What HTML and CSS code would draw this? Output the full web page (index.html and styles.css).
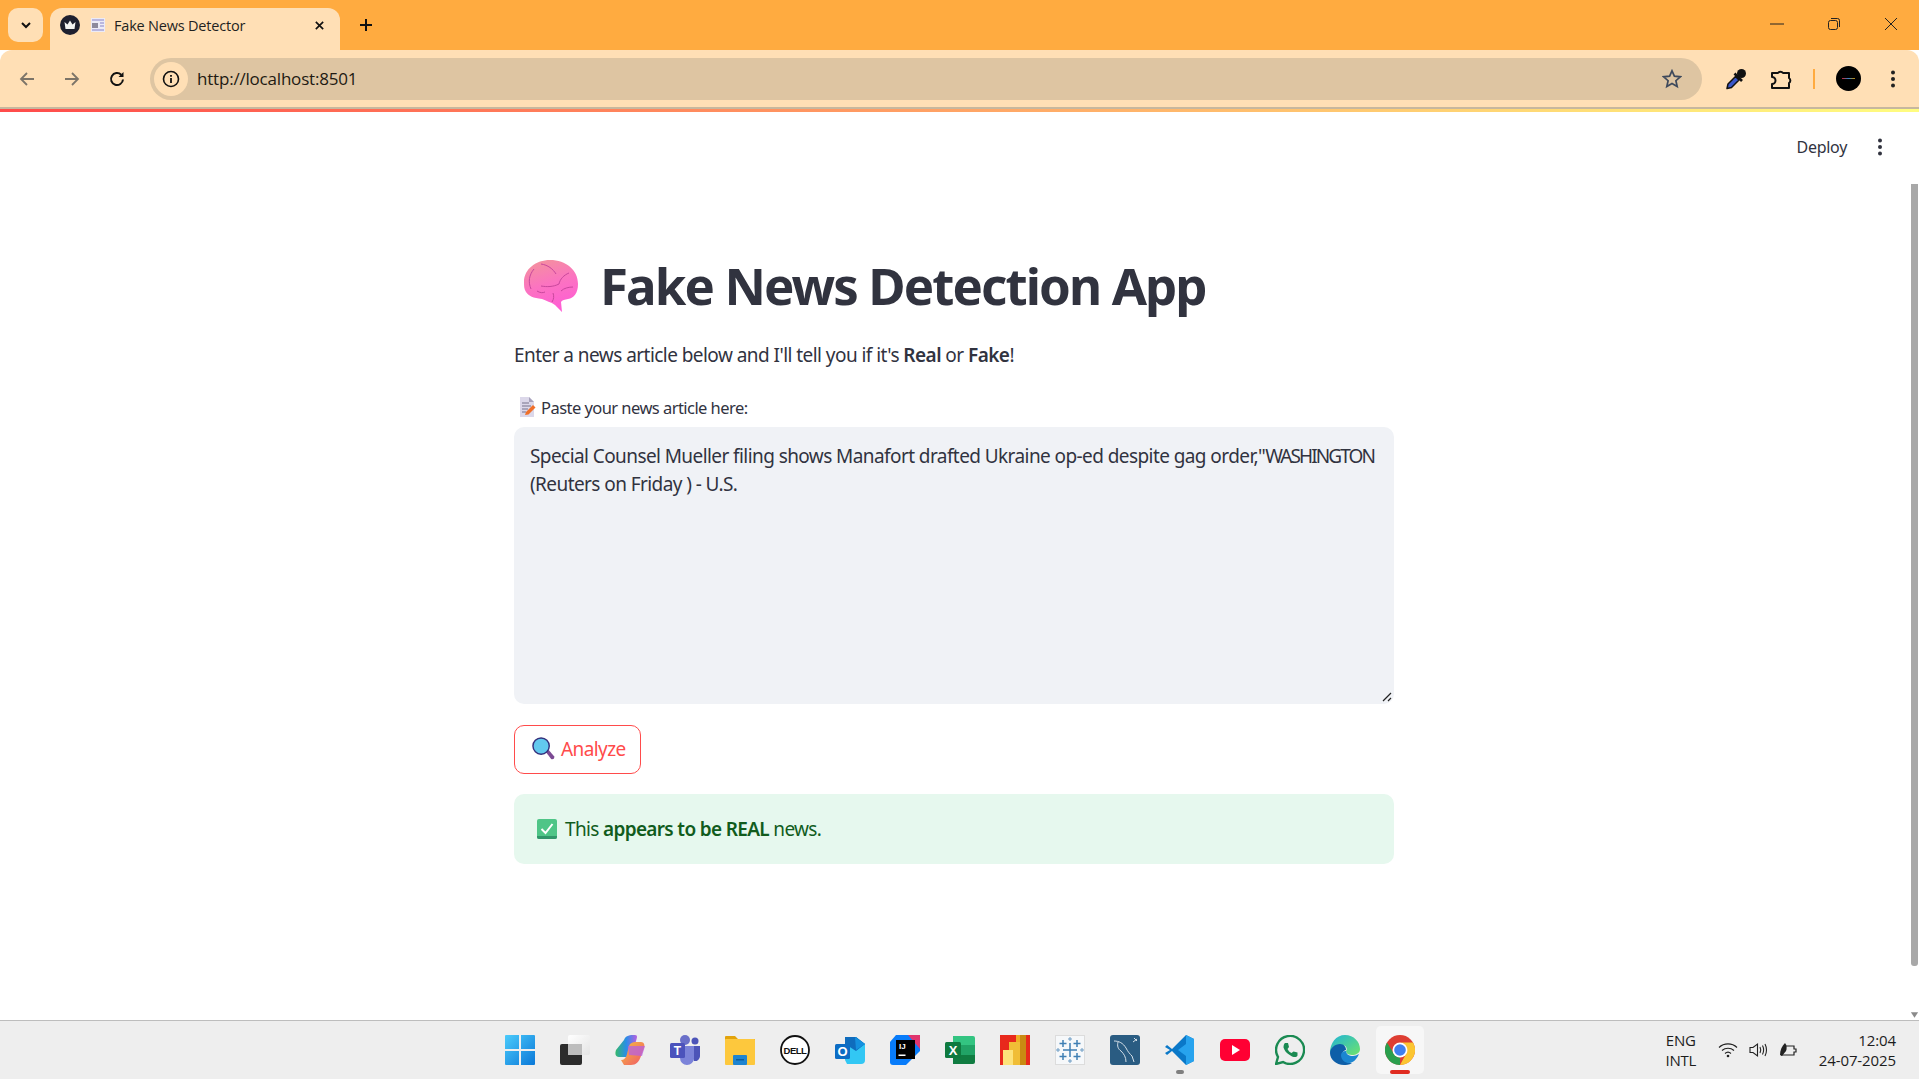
FILE: index.html
```html
<!DOCTYPE html>
<html lang="en">
<head>
<meta charset="utf-8">
<title>Fake News Detector</title>
<link rel="stylesheet" href="styles.css">
</head>
<body>
<div class="screen">
  <header class="tabstrip">
    <div class="tab-search"><svg class="i12" viewBox="0 0 12 12"><path d="M2 4l4 4 4-4" fill="none" stroke="#111" stroke-width="2"/></svg></div>
    <div class="tab">
      <svg class="i20" viewBox="0 0 20 20"><circle cx="10" cy="10" r="10" fill="#1e2030"/><path d="M4.500 7l3 2.500L10 5.500l2.500 4 3-2.500-1 7h-9z" fill="#f4f4f4"/></svg>
      <svg class="fav" viewBox="0 0 14 14"><rect width="14" height="14" fill="#ecebf6"/><path d="M1 2h12M1 12h12M9 5h4M9 8h4" stroke="#a9a6d8" stroke-width="1.500"/><rect x="1" y="5" width="6" height="5" fill="#8d8a9c"/></svg>
      <span class="tab-title">Fake News Detector</span>
      <svg class="i12 tab-close" viewBox="0 0 12 12"><path d="M2 2l8 8M10 2l-8 8" stroke="#111" stroke-width="1.800"/></svg>
    </div>
    <svg class="newtab" viewBox="0 0 14 14"><path d="M7 1v12M1 7h12" stroke="#111" stroke-width="2"/></svg>
    <div class="win-controls">
      <svg class="win" viewBox="0 0 14 14"><path d="M0 7h14" stroke="#222" stroke-width="1"/></svg>
      <svg class="win" viewBox="0 0 14 14"><rect x="1.500" y="3.500" width="9" height="9" rx="2" fill="none" stroke="#222"/><path d="M4 1.500h6.500a2 2 0 0 1 2 2V10" fill="none" stroke="#222"/></svg>
      <svg class="win" viewBox="0 0 14 14"><path d="M1 1l12 12M13 1L1 13" stroke="#222" stroke-width="1"/></svg>
    </div>
  </header>

  <nav class="toolbar">
    <svg class="nav-icon" viewBox="0 0 18 18"><path d="M16 9H3M9 3L3 9l6 6" fill="none" stroke="#7c7468" stroke-width="1.800"/></svg>
    <svg class="nav-icon" viewBox="0 0 18 18"><path d="M2 9h13M9 3l6 6-6 6" fill="none" stroke="#7c7468" stroke-width="1.800"/></svg>
    <svg class="nav-icon" viewBox="0 0 18 18"><path d="M15 9.500A6 6 0 1 1 13.200 4.700" fill="none" stroke="#111" stroke-width="2"/><path d="M15.500 2v5h-5z" fill="#111"/></svg>
    <div class="omnibox">
      <span class="site-info"><svg class="i18" viewBox="0 0 18 18"><circle cx="9" cy="9" r="7.500" fill="none" stroke="#111" stroke-width="1.600"/><path d="M9 8v5M9 5v1.800" stroke="#111" stroke-width="1.800"/></svg></span>
      <span class="url">http://localhost:8501</span>
      <svg class="star" viewBox="0 0 20 20"><path d="M10 1.800l2.400 5.400 5.900.6-4.400 3.900 1.300 5.800L10 14.500l-5.200 3 1.300-5.800L1.700 7.800l5.900-.6z" fill="none" stroke="#3f4a5c" stroke-width="1.700"/></svg>
    </div>
    <div class="tb-actions">
      <svg class="i22" viewBox="0 0 22 22"><path d="M2 20.500l1-4.500 7.500-7.500 3.500 3.500L6.500 19.500z" fill="#3a56c8" stroke="#111" stroke-width="1.500" stroke-linejoin="round"/><path d="M9.500 5.500l7.500 7.500" stroke="#111" stroke-width="2.600"/><circle cx="16.500" cy="5.500" r="4.500" fill="#111"/></svg>
      <svg class="i22" viewBox="0 0 22 22"><path d="M2 5h6a3 3 0 0 1 5 0h6v5a3 3 0 0 1 0 5v5H2v-4a3.500 3.500 0 0 0 0-7z" fill="none" stroke="#111" stroke-width="2" stroke-linejoin="round"/></svg>
      <span class="tb-divider"></span>
      <span class="avatar"><span class="avatar-dash"></span></span>
      <svg class="kebab" viewBox="0 0 4 18"><circle cx="2" cy="2.500" r="2" fill="#222"/><circle cx="2" cy="9" r="2" fill="#222"/><circle cx="2" cy="15.500" r="2" fill="#222"/></svg>
    </div>
  </nav>
  <div class="chrome-edge"></div>
  <div class="decoration"></div>

  <div class="viewport">
    <main class="app">
      <div class="app-header">
        <span class="deploy">Deploy</span>
        <svg class="app-menu" viewBox="0 0 4 18"><circle cx="2" cy="2.500" r="2" fill="#31333f"/><circle cx="2" cy="9" r="2" fill="#31333f"/><circle cx="2" cy="15.500" r="2" fill="#31333f"/></svg>
      </div>
      <section class="block">
        <h1 class="title">
          <svg class="brain" viewBox="0 0 56 52">
            <defs><linearGradient id="brainfill" x1=".3" y1="0" x2=".6" y2="1"><stop offset="0" stop-color="#f4909f"/><stop offset=".45" stop-color="#fb74c0"/><stop offset="1" stop-color="#ff5cd6"/></linearGradient></defs>
            <path d="M1 22C1 9 13 0 27 0c16 0 28 10 28 24 0 9-4 14-10 15-3 .5-6 1-7 3l1 10-7-7c-4-3-9-4-13-6C10 38 6 36 3 32 1 29 1 26 1 22z" fill="url(#brainfill)"/>
            <path d="M11 9c-5 6-6 13-3 20M18 4c7 1 12 5 15 10M46 13c-5 2-9 6-10 11-6 3-12 3-18 2M50 27c-4 0-9 1-12 4M29 42c2-3 2-6 1-9M14 31c3 2 6 2 8 1" fill="none" stroke="#c8479c" stroke-width="1"/>
          </svg>
          <span>Fake News Detection App</span>
        </h1>
        <p class="intro">Enter a news article below and I'll tell you if it's <strong>Real</strong> or <strong>Fake</strong>!</p>
        <label class="field-label">
          <svg class="memo" viewBox="0 0 18 20"><path d="M2 0h9l5 5v15H2z" fill="#dcd8ea"/><path d="M11 0v5h5z" fill="#a7a2bb"/><path d="M4 6h7M4 9h9M4 12h6M4 15h4" stroke="#77728c" stroke-width="1"/><path d="M7 18l1-3 7-7 2.500 2.500-7 7z" fill="#f0702a"/></svg>
          <span>Paste your news article here:</span>
        </label>
        <div class="textarea">
          <div class="textarea-text">Special Counsel Mueller filing shows Manafort drafted Ukraine op-ed despite gag order,"<span class="caps">WASHINGTON</span> (Reuters on Friday ) - U.S.</div>
          <svg class="resize" viewBox="0 0 10 10"><path d="M1 9l8-8M6 9l3-3" stroke="#222" stroke-width="1.200"/></svg>
        </div>
        <button class="analyze" type="button">
          <svg class="lens" viewBox="0 0 24 24"><path d="M14 15l3-2 6 7c1 2-1 4-3 3z" fill="#7b4a93"/><circle cx="9.500" cy="9.500" r="8.500" fill="#62c9ee" stroke="#34307c" stroke-width="1.500"/></svg>
          <span>Analyze</span>
        </button>
        <div class="alert">
          <svg class="check" viewBox="0 0 20 20"><rect width="20" height="20" rx="2" fill="#4fc587"/><path d="M0 17h20v1a2 2 0 0 1-2 2H2a2 2 0 0 1-2-2z" fill="#31966a"/><path d="M4.500 10l4 4 7-9" fill="none" stroke="#fff" stroke-width="2"/></svg>
          <span>This <strong>appears to be REAL</strong> news.</span>
        </div>
      </section>
    </main>
    <aside class="scrollbar">
      <span class="thumb"></span>
      <svg class="scroll-arrow" viewBox="0 0 10 6"><path d="M1 0h8L5 6z" fill="#8a8a8a"/></svg>
    </aside>
  </div>

  <footer class="taskbar">
    <div></div>
    <div class="tb-apps">
      <svg class="app-i" viewBox="0 0 30 30"><defs><linearGradient id="w" x1="0" y1="0" x2="1" y2="1"><stop offset="0" stop-color="#4bcbfb"/><stop offset="1" stop-color="#0a78d8"/></linearGradient></defs><path d="M0 1a1 1 0 0 1 1-1h13v14H0zM16 0h13a1 1 0 0 1 1 1v13H16zM0 16h14v14H1a1 1 0 0 1-1-1zM16 16h14v13a1 1 0 0 1-1 1H16z" fill="url(#w)"/></svg>
      <svg class="app-i" viewBox="0 0 30 30"><defs><linearGradient id="tv" x1="0" y1="0" x2="1" y2="1"><stop offset="0" stop-color="#fff"/><stop offset="1" stop-color="#e4e4e4"/></linearGradient></defs><rect x="8" y="0" width="22" height="20" rx="2" fill="url(#tv)"/><rect x="0" y="9" width="22" height="21" rx="2" fill="#2b2b2b"/><rect x="8" y="9" width="14" height="11" fill="#bdbdbd"/></svg>
      <svg class="app-i" viewBox="0 0 30 30"><defs><linearGradient id="c1" x1="0" y1="0" x2="1" y2="0"><stop offset="0" stop-color="#35b96b"/><stop offset=".5" stop-color="#2a8de8"/><stop offset="1" stop-color="#b760e0"/></linearGradient><linearGradient id="c2" x1="0" y1="0" x2="1" y2="1"><stop offset="0" stop-color="#f6c13a"/><stop offset="1" stop-color="#f0566a"/></linearGradient></defs><path d="M9 5c2-5 6-5 11-5 3 0 2 3 1 6l-3 10c-1 4-3 6-7 6H4c-4 0-4-4-3-7z" fill="url(#c1)"/><path d="M6 25c3 0 5-2 6-6l2-8c1-3 4-4 6-4h6c3 0 4 3 3 6l-3 8c-2 6-5 9-10 9H9z" fill="url(#c2)"/><path d="M13 11h17l-3 10-13-1z" fill="#b760e0" opacity=".75"/></svg>
      <svg class="app-i" viewBox="0 0 30 30"><circle cx="15" cy="5" r="5" fill="#6a70c9"/><circle cx="25" cy="6" r="3.500" fill="#4c54b8"/><path d="M19 11h11v10a5 5 0 0 1-6 5z" fill="#4c54b8"/><path d="M8 11h16v12a7 7 0 0 1-14 0z" fill="#7b83d9"/><rect y="8" width="15" height="15" rx="1.500" fill="#4b53bc"/><text x="7.500" y="20" class="ico-t ico-t-sm" text-anchor="middle">T</text></svg>
      <svg class="app-i" viewBox="0 0 30 30"><path d="M0 2a1 1 0 0 1 1-1h9l3 3h17v5H0z" fill="#e2a30c"/><rect y="4" width="30" height="26" rx="1" fill="#fdc83d"/><rect x="8" y="20" width="14" height="10" rx="1" fill="#1e84d0"/><rect x="11" y="24" width="8" height="1.500" fill="#0b5c9e"/></svg>
      <svg class="app-i" viewBox="0 0 30 30"><circle cx="15" cy="15" r="14" fill="#fff" stroke="#111" stroke-width="1.800"/><text x="15" y="18.500" class="ico-dell" text-anchor="middle">DELL</text></svg>
      <svg class="app-i" viewBox="0 0 30 30"><path d="M10 2h11l9 7v16a4 4 0 0 1-4 4H12l-2-4z" fill="#32c7f4"/><path d="M10 2h11l9 7-9 7-11-7z" fill="#0f6cbd"/><path d="M20 2l10 7-9 6z" fill="#1490df"/><rect y="9" width="15" height="15" rx="1.500" fill="#0c6cc4"/><text x="7.500" y="21" class="ico-t" text-anchor="middle">O</text></svg>
      <svg class="app-i" viewBox="0 0 30 30"><path d="M6 0h24v16L16 30H3a3 3 0 0 1-3-3V7z" fill="#087cfa"/><path d="M18 0h12v14z" fill="#e0356e"/><rect x="6" y="5" width="19" height="19" fill="#000"/><text x="9" y="14" class="ico-t ico-t-xs">IJ</text><rect x="8.500" y="19.500" width="7" height="1.500" fill="#fff"/></svg>
      <svg class="app-i" viewBox="0 0 30 30"><path d="M8 1h20a2 2 0 0 1 2 2v7H8z" fill="#33c481"/><rect x="8" y="10" width="22" height="10" fill="#21a366"/><path d="M8 20h22v7a2 2 0 0 1-2 2H8z" fill="#107c41"/><rect y="7" width="16" height="16" rx="1.500" fill="#0e7a3f"/><text x="8" y="20" class="ico-t" text-anchor="middle">X</text></svg>
      <svg class="app-i" viewBox="0 0 30 30"><rect width="30" height="30" fill="#e8291c"/><rect x="16" width="10" height="30" fill="#c98a12"/><rect x="16" width="4" height="30" fill="#efae25"/><rect x="9" y="7" width="11" height="23" fill="#f0bd36"/><rect x="3" y="15" width="10" height="15" fill="#fde27a"/></svg>
      <svg class="app-i" viewBox="0 0 30 30"><rect x=".5" y=".5" width="29" height="29" fill="#f6f8fa" stroke="#dcdcdc"/><path d="M15 8v14M8 15h14M8 5v7M4.500 8.500h7M22 5v7M18.500 8.500h7M8 18v7M4.500 21.500h7M22 18v7M18.500 21.500h7" stroke="#3f7fb4" stroke-width="1.500"/><path d="M15 2v4M13 4h4M15 24v4M13 26h4M3 13v4M1 15h4M27 13v4M25 15h4" stroke="#6c9cc4" stroke-width="1"/></svg>
      <svg class="app-i" viewBox="0 0 30 30"><rect width="30" height="30" rx="3" fill="#2a5c82"/><path d="M4 6c5 0 9 2 12 7 2 4 4 6 6 8l2 6M8 7c-1 4 0 7 3 9 3 3 5 6 5 11M24 3l3 3M23 7l4-3" fill="none" stroke="#d4dfe8" stroke-width="1"/></svg>
      <span class="vscode-wrap">
        <svg class="app-i" viewBox="0 0 30 30"><path d="M21 0l8 4v22l-8 4L7 16l-5 4-2-2 5-3-5-3 2-2 5 4z" fill="#0a78c8"/><path d="M21 0l8 4v22l-8 4V21l-8-6 8-6z" fill="#27a3ee"/></svg>
        <span class="running"></span>
      </span>
      <svg class="app-i" viewBox="0 0 30 30"><rect y="4" width="30" height="22" rx="5" fill="#ff0033"/><path d="M12 10l8 5-8 5z" fill="#fff"/></svg>
      <svg class="app-i" viewBox="0 0 30 30"><path d="M1 29l2-7A14 14 0 1 1 8 27z" fill="none" stroke="#1a8a52" stroke-width="2.400"/><path d="M10 8l3 0 1 4-1.500 2c1 2 2 3 4 4l2-1.500 4 1v3c-1 2-4 2-7 0-4-2-6-5-7-8 0-2 .5-4 1.500-4.500z" fill="#1a8a52"/></svg>
      <svg class="app-i" viewBox="0 0 30 30"><defs><linearGradient id="e1" x1="0" y1="0" x2="1" y2="1"><stop offset="0" stop-color="#1fb4d8"/><stop offset="1" stop-color="#6fe36b"/></linearGradient></defs><path d="M15 0c9 0 15 7 15 14 0 4-4 6-8 6-5 0-6-3-6-4 2-2 0-6-4-6C6 10 2 14 0 18 0 8 6 0 15 0z" fill="url(#e1)"/><path d="M0 18c0-5 5-9 10-9 4 0 6 3 6 6-4 1-5 5-2 9 2 3 5 4 8 4-3 2-6 2-8 2-8 0-14-6-14-12z" fill="#0e5fa8"/><path d="M16 16c0 3 3 5 7 5 2 0 4-1 6-2-2 5-6 9-10 9-5 0-8-4-8-8 0-2 2-4 5-4z" fill="#1b86d1"/></svg>
      <span class="chrome-wrap">
        <svg class="app-i" viewBox="0 0 30 30"><circle cx="15" cy="15" r="15" fill="#de3e33"/><path d="M15 30A15 15 0 0 1 2 7.500L9 19a7 7 0 0 0 6 3.500z" fill="#2a9f4d"/><path d="M15 30a15 15 0 0 0 13-22.500H15a7.500 7.500 0 0 1 6 11.500z" fill="#fbc531"/><circle cx="15" cy="15" r="7.500" fill="#fff"/><circle cx="15" cy="15" r="5.800" fill="#3f7fee"/></svg>
        <span class="active-bar"></span>
      </span>
    </div>
    <div class="tray">
      <div class="lang">ENG<br>INTL</div>
      <svg class="tray-i" viewBox="0 0 20 16"><path d="M1 5.500a13 13 0 0 1 18 0M4 8.500a9 9 0 0 1 12 0M7 11.500a4.500 4.500 0 0 1 6 0" fill="none" stroke="#222" stroke-width="1.100"/><circle cx="10" cy="14" r="1.300" fill="#222"/></svg>
      <svg class="tray-i" viewBox="0 0 20 16"><path d="M1 5.500h3L8.500 2v12L4 10.500H1zM11 5c1 2 1 4 0 6M13.500 3.500c1.500 3 1.500 6 0 9M16 2c2 4 2 8 0 12" fill="none" stroke="#222" stroke-width="1.100"/></svg>
      <svg class="tray-i" viewBox="0 0 20 16"><path d="M5 4h10v3h2v3h-2v3H2" fill="none" stroke="#222" stroke-width="1.200"/><path d="M1 13c0-5 2-9 5-12 2 2 2 6 1 8l-4 5z" fill="#222"/></svg>
      <div class="clock">12:04<br>24-07-2025</div>
    </div>
  </footer>
</div>
</body>
</html>
```
FILE: styles.css
```css
* { box-sizing: border-box; }
html, body { margin: 0; height: 100%; overflow: hidden; }
body { font-family: "Noto Sans", sans-serif; color: #31333f; background: #fff; }
svg { display: block; flex: none; }
.screen { display: flex; flex-direction: column; height: 1079px; width: 1919px; }

.tabstrip { height: 50px; background: #ffab40; display: flex; align-items: flex-start; padding-left: 8px; flex: none; }
.tab-search { width: 35px; height: 34px; margin-top: 8px; border-radius: 10px; background: #ffdfb5; display: flex; align-items: center; justify-content: center; }
.i12 { width: 12px; height: 12px; }
.i18 { width: 18px; height: 18px; }
.i20 { width: 20px; height: 20px; }
.i22 { width: 22px; height: 22px; }
.tab { width: 290px; height: 42px; margin: 8px 0 0 7px; padding: 0 15px 8px 10px; border-radius: 12px 12px 0 0; background: #ffdfb5; display: flex; align-items: center; }
.fav { width: 14px; height: 14px; margin-left: 11px; }
.tab-title { font-family: "Open Sans", sans-serif; font-size: 14.500px; letter-spacing: -.2px; margin-left: 9px; flex: 1; color: #1f1f1f; white-space: nowrap; }
.tab-close { width: 11px; height: 11px; }
.newtab { width: 14px; height: 14px; margin: 18px 0 0 19px; }
.win-controls { margin-left: auto; display: flex; gap: 43px; padding: 17px 21px 0 0; }
.win { width: 14px; height: 14px; }

.toolbar { height: 57px; background: #ffdfb5; display: flex; align-items: center; padding: 0 0 0 18px; flex: none; border-radius: 12px 12px 0 0; }
.nav-icon { width: 18px; height: 18px; margin-right: 27px; }
.omnibox { height: 42px; width: 1552px; margin-left: -3px; border-radius: 21px; background: #dec5a2; display: flex; align-items: center; padding-left: 4px; }
.site-info { width: 34px; height: 34px; border-radius: 50%; background: #ffdfb5; display: flex; align-items: center; justify-content: center; flex: none; }
.url { font-family: "Open Sans", sans-serif; font-size: 17px; letter-spacing: -.2px; margin-left: 9px; color: #221a12; flex: 1; }
.star { width: 20px; height: 20px; margin-right: 20px; }
.tb-actions { display: flex; align-items: center; margin-left: 23px; }
.tb-actions .i22:nth-child(2) { margin-left: 23px; }
.tb-divider { width: 2px; height: 20px; background: #ffab40; margin: 0 0 0 21px; }
.avatar { width: 25px; height: 25px; border-radius: 50%; background: #000; margin-left: 21px; display: flex; align-items: center; justify-content: center; }
.avatar-dash { width: 13px; height: 1px; background: linear-gradient(90deg, #c23, #38c 50%, #c80); }
.kebab { width: 4px; height: 18px; margin-left: 30px; }
.chrome-edge { height: 2px; background: #c7b79e; flex: none; }
.decoration { height: 3px; background: linear-gradient(90deg, #ff4b4b, #fffd80); flex: none; }

.viewport { flex: 1; display: flex; min-height: 0; background: #fff; }
.app { flex: 1; min-width: 0; padding-right: 1px; }
.app-header { height: 70px; display: flex; align-items: center; justify-content: flex-end; padding: 0 26px 0 0; }
.deploy { font-size: 16px; letter-spacing: -.3px; margin-right: 31px; }
.app-menu { width: 4px; height: 18px; }
.block { width: 880px; margin: 0 auto; }
.title { margin: 70px 0 0; height: 70px; padding: 0 0 3px 9px; display: flex; align-items: center; font-size: 51px; line-height: 67px; font-weight: 700; letter-spacing: -1.900px; white-space: nowrap; }
.brain { width: 56px; height: 52px; margin-right: 21px; }
.intro { margin: 17px 0 0; font-size: 19px; line-height: 32px; letter-spacing: -.55px; color: #31333f; }
.intro strong, .alert strong { font-weight: 600; }
.field-label { margin-top: 24px; height: 24px; display: flex; align-items: center; padding-left: 4px; font-size: 16.500px; letter-spacing: -.55px; }
.memo { width: 18px; height: 20px; margin-right: 5px; }
.textarea { margin-top: 8px; height: 277px; border-radius: 10px; background: #f0f2f6; padding: 15px 4px 15px 16px; font-size: 19px; line-height: 28px; letter-spacing: -.58px; position: relative; }
.textarea-text { color: #31333f; }
.caps { letter-spacing: -1.900px; }
.resize { position: absolute; right: 2px; bottom: 2px; width: 10px; height: 10px; }
.analyze { margin-top: 21px; width: 127px; height: 49px; border-radius: 10px; border: 1px solid #ff4b4b; background: #fff; color: #ff4b4b; font: inherit; font-size: 19px; letter-spacing: -.6px; display: flex; align-items: center; padding: 0 0 2px 17px; }
.lens { width: 23px; height: 23px; margin-right: 6px; }
.alert { margin-top: 20px; height: 70px; border-radius: 10px; background: #e6f8ee; color: #115c1d; display: flex; align-items: center; padding-left: 23px; font-size: 19px; letter-spacing: -.66px; }
.check { width: 20px; height: 20px; margin-right: 8px; }

.scrollbar { width: 10px; flex: none; display: flex; flex-direction: column; align-items: center; padding-top: 72px; }
.thumb { width: 7px; height: 782px; background: #a8a8a8; border-radius: 0 0 3px 3px; }
.scroll-arrow { width: 9px; height: 6px; margin-top: 46px; }

.taskbar { height: 59px; padding-bottom: 1px; flex: none; background: #eeeeee; border-top: 1px solid #bdbdbd; display: grid; grid-template-columns: 1fr auto 1fr; align-items: center; }
.tb-apps { display: flex; align-items: center; gap: 25px; }
.app-i { width: 30px; height: 30px; }
.vscode-wrap, .chrome-wrap { position: relative; display: block; }
.chrome-wrap::before { content: ""; position: absolute; left: -9px; top: -9px; width: 48px; height: 48px; border-radius: 5px; background: #f7f7f7; }
.chrome-wrap svg { position: relative; }
.running { position: absolute; left: 11px; top: 35px; width: 8px; height: 4px; border-radius: 2px; background: #7f7f7f; }
.active-bar { position: absolute; left: 5px; top: 35px; width: 20px; height: 4px; border-radius: 2px; background: #e02b20; }
.ico-t { fill: #fff; font-family: "Liberation Sans", sans-serif; font-weight: 700; font-size: 13px; }
.ico-t-sm { font-size: 12px; }
.ico-t-xs { font-size: 8px; }
.ico-dell { fill: #111; font-family: "Liberation Sans", sans-serif; font-weight: 700; font-size: 9.500px; letter-spacing: -.5px; }
.tray { display: flex; align-items: center; justify-content: flex-end; padding-right: 23px; font-family: "Open Sans", sans-serif; font-size: 15px; line-height: 20px; color: #1d1d1d; }
.lang { text-align: center; margin-right: 22px; letter-spacing: -.2px; }
.tray-i { width: 20px; height: 16px; margin-right: 10.500px; }
.clock { text-align: right; margin-left: 9px; letter-spacing: -.1px; }
```
